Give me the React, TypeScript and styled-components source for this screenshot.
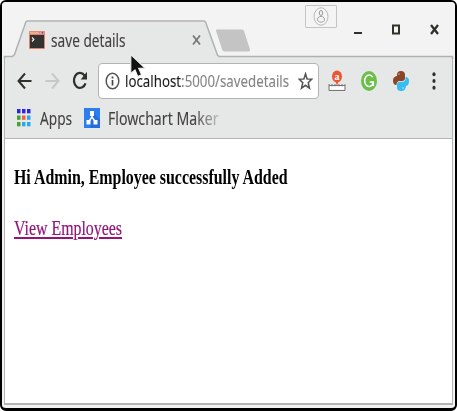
import React from "react";
import styled, { createGlobalStyle } from "styled-components";

const GlobalStyle = createGlobalStyle`
  *, *::before, *::after { box-sizing: border-box; }
  html, body { margin: 0; padding: 0; background: #fff; overflow: hidden; }
`;

const Window = styled.main`
  position: relative;
  display: flex;
  flex-direction: column;
  width: 457px;
  height: 411px;
  border: solid #000;
  border-width: 2px 2px 3px 2px;
  border-radius: 6px;
  background: #f2f2f2;
  overflow: hidden;
  font-family: "Noto Sans", sans-serif;
`;

const TitleBar = styled.header`
  position: relative;
  display: flex;
  flex: 0 0 55px;
  background: #f3f3f3;
`;

const TabShape = styled.svg`
  position: absolute;
  inset: 0;
  width: 453px;
  height: 57px;
`;

const Tab = styled.div`
  position: relative;
  display: flex;
  align-items: center;
  width: 250px;
  height: 35px;
  margin-top: 20px;
  padding-left: 27px;
`;

const Controls = styled.div`
  position: relative;
  display: flex;
  margin-left: 53px;
`;

const Icon = styled.svg<{ $gap?: number; $top?: number }>`
  display: block;
  flex: none;
  margin-left: ${(p) => p.$gap ?? 0}px;
  margin-top: ${(p) => p.$top ?? 0}px;
`;

const Label = styled.span<{
  $size: number;
  $width: number;
  $scale: number;
  $color?: string;
  $gap?: number;
  $top?: number;
}>`
  display: block;
  flex: none;
  width: ${(p) => p.$width}px;
  margin-left: ${(p) => p.$gap ?? 0}px;
  margin-top: ${(p) => p.$top ?? 0}px;
  font-size: ${(p) => p.$size}px;
  line-height: 24px;
  white-space: nowrap;
  color: ${(p) => p.$color ?? "#42423e"};
  -webkit-text-stroke: 0.1px currentColor;
  transform: scaleX(${(p) => p.$scale});
  transform-origin: 0 50%;
`;

const Chrome = styled.section`
  display: flex;
  flex-direction: column;
  flex: 0 0 82px;
  margin: 0 2px;
  border: solid #b3b5b4;
  border-width: 0 1px 1.5px;
  background: #e6e8e7;
`;

const Toolbar = styled.nav`
  display: flex;
  align-items: center;
  height: 47px;
  padding-left: 11px;
`;

const AddressBar = styled.div`
  display: flex;
  align-items: center;
  width: 221px;
  height: 36px;
  margin-left: 10px;
  padding-left: 6px;
  border: 1px solid #b2b4b3;
  border-radius: 4px;
  background: #fff;
`;

const Muted = styled.span`
  color: #858585;
`;

const Bookmarks = styled.nav`
  display: flex;
  align-items: center;
  height: 28px;
  padding-left: 11px;
`;

const Fade = styled.div`
  width: 150px;
  mask-image: linear-gradient(to right, #000 94px, transparent 126px);
`;

const Page = styled.article`
  flex: 1;
  margin: 0 2px 3px;
  padding: 26px 0 0 9px;
  border: solid #b3b5b4;
  border-width: 0 1px 2px;
  background: #fff;
  font-family: "Liberation Serif", serif;
`;

const Heading = styled.h1<{ $scale: number }>`
  width: 274px;
  margin: 0;
  font-size: 20.5px;
  line-height: 24px;
  white-space: nowrap;
  color: #000;
  transform: scaleX(${(p) => p.$scale});
  transform-origin: 0 50%;
`;

const Link = styled.a<{ $scale: number }>`
  display: block;
  width: max-content;
  margin-top: 27px;
  font-size: 20.5px;
  line-height: 24px;
  color: #93147c;
  -webkit-text-stroke: 0.2px currentColor;
  text-decoration: underline;
  transform: scaleX(${(p) => p.$scale});
  transform-origin: 0 50%;
`;

const Cursor = styled.svg`
  position: absolute;
  left: 126px;
  top: 52px;
`;

const dots = ["#2a27e0", "#2a27e0", "#2a27e0", "#45a02c", "#f0623a", "#28a8f0", "#45a02c", "#28a8f0", "#28a8f0"];

export default function App() {
  return (
    <>
      <GlobalStyle />
      <Window>
        <TitleBar>
          <TabShape viewBox="2 2 453 57">
            <path d="M5 59V56.5H12.5L15 54L26 21.5H204.5L217.5 55.5L219 56.5H452.5V59Z" fill="#e6e8e7" />
            <path d="M4.5 59V56.5H12.5L14.5 54.5L26 21.5L27.5 21H204L205.5 22L217.5 55L219 56.5H452.5V59" fill="none" stroke="#b0b2b1" strokeWidth="1.5" />
            <path d="M217 29.5H242Q243.500 29.500 244 31L250 49.500Q250.500 51.500 248.500 51.500H225Q223 51.500 222.300 50L216 31Q215.500 29.500 217 29.500Z" fill="#c4c4c4" />
          </TabShape>
          <Tab>
            <Icon width="16" height="18" viewBox="0 0 16 18" $top={0}>
              <rect width="16" height="18" rx=".7" fill="#e28366" />
              <rect x=".8" y=".8" width="14.400" height="2.200" fill="#efaa92" />
              <circle cx="13.400" cy="1.800" r="1" fill="#6451d6" />
              <circle cx="10.500" cy="1.800" r=".7" fill="#c07bb0" />
              <rect x="1" y="4" width="14" height="13" fill="#333231" />
              <path d="M3 6.500L4.800 8.500L3 10.500" fill="none" stroke="#eee" strokeWidth="1.300" />
            </Icon>
            <Label $size={17.5} $width={75} $scale={0.78} $gap={5.5}>save details</Label>
            <Icon width="9" height="12" viewBox="0 0 9 12" $gap={66} $top={0}>
              <path d="M1 1.500L8 10.500M8 1.500L1 10.500" stroke="#777876" strokeWidth="1.800" />
            </Icon>
          </Tab>
          <Controls>
            <Icon width="32" height="23" viewBox="0 0 32 23" $top={3}>
              <rect x=".5" y=".5" width="31" height="22" rx=".5" fill="#f4f4f4" stroke="#c4c4c4" />
              <ellipse cx="16" cy="11.500" rx="7" ry="8.700" fill="none" stroke="#b8b8b8" />
              <ellipse cx="16" cy="8" rx="1.700" ry="2.500" fill="none" stroke="#999" />
              <path d="M14.700 11.500Q11.800 12.500 12.500 15.500Q16 19 19.500 15.500Q20 12.500 17.300 11.500Z" fill="none" stroke="#a5a5a5" />
            </Icon>
            <Icon width="8" height="3" viewBox="0 0 8 3" $gap={17} $top={30}>
              <path d="M0 1H8" stroke="#30312b" strokeWidth="2" />
            </Icon>
            <Icon width="8" height="11" viewBox="0 0 8 11" $gap={30} $top={22}>
              <rect x="1" y="1.500" width="6" height="8" fill="none" stroke="#30312b" strokeWidth="2" />
            </Icon>
            <Icon width="9" height="11" viewBox="0 0 9 11" $gap={29.5} $top={22}>
              <path d="M1 1L8 10M8 1L1 10" stroke="#30312b" strokeWidth="2.300" />
            </Icon>
          </Controls>
        </TitleBar>
        <Chrome>
          <Toolbar>
            <Icon width="15" height="18" viewBox="0 0 15 18" $gap={0.5}>
              <path d="M14.500 9H1.500M8 1.500L1.500 9L8 16.500" fill="none" stroke="#30312b" strokeWidth="2" />
            </Icon>
            <Icon width="15" height="18" viewBox="0 0 15 18" $gap={13}>
              <path d="M.5 9H13.500M7 1.500L13.500 9L7 16.500" fill="none" stroke="#c7c8c7" strokeWidth="2" />
            </Icon>
            <Icon width="16" height="19" viewBox="0 0 16 19" $gap={12.5}>
              <path d="M12.500 4.500A6 7.500 0 1 0 13.500 12.300" fill="none" stroke="#30312b" strokeWidth="2.300" />
              <path d="M15 .7V8.500H8.700Z" fill="#30312b" />
            </Icon>
            <AddressBar>
              <Icon width="15" height="18" viewBox="0 0 15 18">
                <ellipse cx="7.500" cy="9" rx="6.300" ry="7.800" fill="none" stroke="#555" strokeWidth="1.500" />
                <path d="M7.500 8V13.500M7.500 4.500V6.500" stroke="#444" strokeWidth="1.700" />
              </Icon>
              <Label $size={17} $width={167} $scale={0.781} $gap={5} $color="#1c1c1c">
                localhost<Muted>:5000/savedetails</Muted>
              </Label>
              <Icon width="15" height="18" viewBox="0 0 15 18" $gap={5.5}>
                <path d="M7.500 1.800L9.100 6.900L13.800 7.100L10.200 10.800L11.500 16.200L7.500 13.300L3.500 16.200L4.800 10.800L1.200 7.100L5.900 6.900Z" fill="none" stroke="#555" strokeWidth="1.500" />
              </Icon>
            </AddressBar>
            <Icon width="18" height="22" viewBox="0 0 18 22" $gap={9}>
              <path d="M1 14V20.500H17V14M1 15.500H17M4 14V16.500M7 14V16.500M11 14V16.500M14 14V16.500" fill="none" stroke="#777" strokeWidth="1" />
              <path d="M2 16.500H16V19.500H2Z" fill="#fff" />
              <path d="M7.500 11H10.500L9 16Z" fill="#ed5633" />
              <ellipse cx="9" cy="6.500" rx="5" ry="6" fill="#ed5633" />
              <text x="9" y="9.800" textAnchor="middle" fontFamily="Liberation Serif, serif" fontWeight="700" fontSize="10" fill="#fff">a</text>
            </Icon>
            <Icon width="16" height="20" viewBox="0 0 16 20" $gap={15}>
              <ellipse cx="8" cy="10" rx="8" ry="10" fill="#6abf49" />
              <path d="M11.700 6.200A4.500 5.700 0 1 0 12.300 12V11H8.700M12.300 11V15" fill="none" stroke="#fff" strokeWidth="1.600" />
            </Icon>
            <Icon width="16" height="20" viewBox="0 0 16 20" $gap={16}>
              <path d="M12.500 6Q16 6 16 10Q16 14.500 13 15Q12.500 20 8.500 20Q4 20 4 16.500V13.500Q4 10.700 7 10.700H10Q12.500 10.500 12.500 7.500Z" fill="#36bdf2" />
              <path d="M4 4Q4 0 8 0Q12 0 12 4V7Q12 10 9 10H6.500Q3.500 10.300 3.500 14Q0 14 0 9.500Q0 5.500 4 5Z" fill="#8b4527" />
              <circle cx="6" cy="3" r=".8" fill="#d5a991" />
              <circle cx="10" cy="17" r=".8" fill="#baf0ff" />
            </Icon>
            <Icon width="4" height="18" viewBox="0 0 4 18" $gap={22.5}>
              <ellipse cx="2" cy="2.300" rx="1.600" ry="2" fill="#30312b" />
              <ellipse cx="2" cy="9" rx="1.600" ry="2" fill="#30312b" />
              <ellipse cx="2" cy="15.700" rx="1.600" ry="2" fill="#30312b" />
            </Icon>
          </Toolbar>
          <Bookmarks>
            <Icon width="14" height="18" viewBox="0 0 14 18" $gap={0.5}>
              {dots.map((color, i) => (
                <rect key={i} x={(i % 3) * 5} y={Math.floor(i / 3) * 6.5} width="3.500" height="4.300" fill={color} />
              ))}
            </Icon>
            <Label $size={18} $width={34} $scale={0.76} $gap={9.5}>Apps</Label>
            <Icon width="16" height="20" viewBox="0 0 16 20" $gap={10}>
              <rect width="16" height="20" fill="#2b7df0" />
              <path d="M9 4L16 12V20H6Z" fill="#236cdd" />
              <path d="M8 5V9L4.500 14M8 9L11.500 14" fill="none" stroke="#fff" strokeWidth="1.400" />
              <path d="M6 3H10V8H6ZM2.500 12H6.500V16.500H2.500ZM9.500 12H13.500V16.500H9.500Z" fill="#fff" />
            </Icon>
            <Fade>
              <Label $size={18} $width={109} $scale={0.785} $gap={7.5}>Flowchart Maker</Label>
            </Fade>
          </Bookmarks>
        </Chrome>
        <Page>
          <Heading $scale={0.776}>Hi Admin, Employee successfully Added</Heading>
          <Link $scale={0.775}>View Employees</Link>
        </Page>
        <Cursor width="18" height="24" viewBox="0 0 18 24">
          <path d="M2.800 .6V19.500L7 16L9.800 22.500L13.500 20.700L10.700 14.300H17.200Z" fill="#111" stroke="#f1f1f1" strokeWidth="1.100" />
        </Cursor>
      </Window>
    </>
  );
}
